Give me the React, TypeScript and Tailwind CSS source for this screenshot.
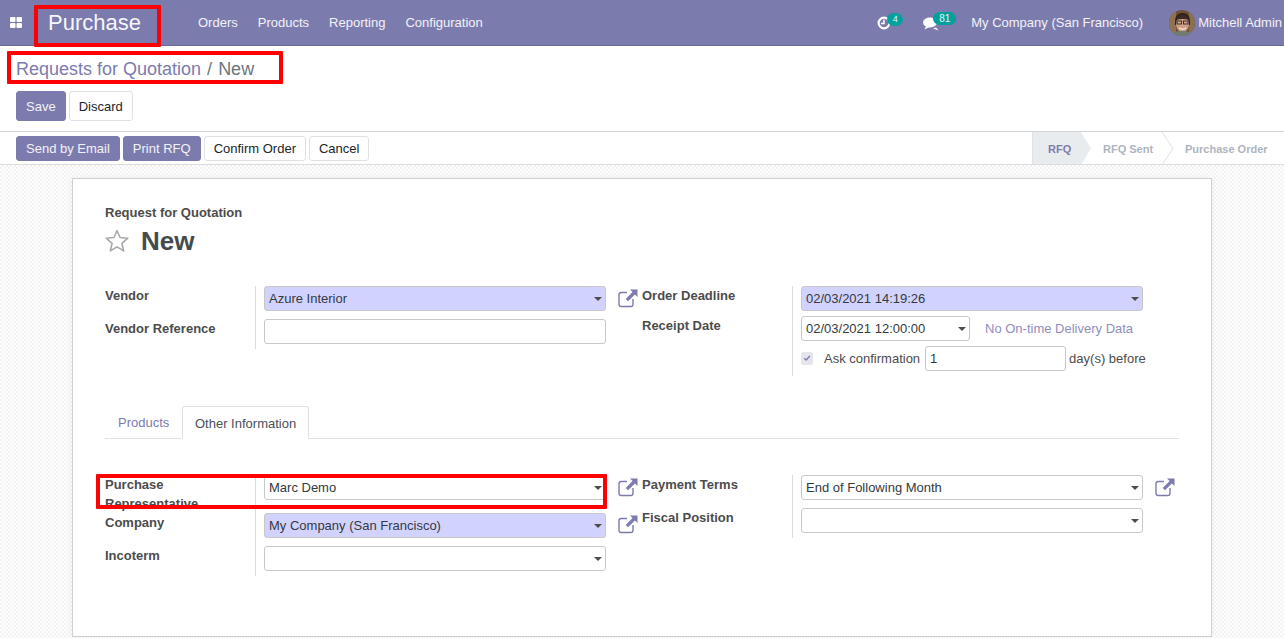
import React from "react";

const Ext = () => (
  <svg width="20" height="19" viewBox="0 0 20 19" fill="none" className="block">
    <path d="M9 3.500H3.200C2 3.500 1 4.500 1 5.700v9.600C1 16.500 2 17.500 3.200 17.500h9.600c1.200 0 2.200-1 2.200-2.200V10" stroke="#7c7bad" strokeWidth="1.400" />
    <path d="M12 0.500H19.500V8L16.900 5.400L10 12.300L7.700 10L14.600 3.100Z" fill="#7c7bad" />
  </svg>
);

const Caret = () => (
  <span className="absolute right-[3px] top-[10px] w-0 h-0 border-x-[4px] border-x-transparent border-t-[4px] border-t-[#4c4c4c]" />
);

const Field = ({ value = "", fill = false, caret = true, width = "w-[342px]" }: { value?: string; fill?: boolean; caret?: boolean; width?: string }) => (
  <div className={`relative ${width} h-[25px] border border-[#c8c8c8] rounded-[3px] pl-1 pr-4 leading-[23px] text-[#343a40] ${fill ? "bg-[#d2d2ff]" : "bg-white"}`}>
    {value}
    {caret && <Caret />}
  </div>
);

const Label = ({ children, h }: { children: React.ReactNode; h: string }) => (
  <div className={`${h} w-[151px] border-r border-[#dcdcdc] font-bold text-[#4c4c4c] leading-[19.500px] pr-[15px]`}>{children}</div>
);

const Row = ({ label, h, children, icon }: { label: React.ReactNode; h: string; children: React.ReactNode; icon?: React.ReactNode }) => (
  <div className="flex">
    <Label h={h}>{label}</Label>
    <div className="pl-2 w-[350px]">{children}</div>
    <div className="pl-3">{icon}</div>
  </div>
);

const Btn = ({ children, primary, h = "h-[30px]" }: { children: React.ReactNode; primary?: boolean; h?: string }) => (
  <div className={`${h} px-[9px] pt-[2px] rounded-[3px] flex items-center border ${primary ? "bg-[#7c7bad] border-[#7c7bad] text-white/90" : "bg-white border-[#dee2e6] text-[#212529]"}`}>{children}</div>
);

const Avatar = () => (
  <svg width="26" height="26" viewBox="0 0 26 26" className="block">
    <defs><clipPath id="av"><circle cx="13" cy="13" r="13" /></clipPath></defs>
    <g clipPath="url(#av)">
      <rect width="26" height="26" fill="#6f5238" />
      <rect x="0" y="0" width="7" height="26" fill="#8f7350" />
      <rect x="20" y="0" width="6" height="26" fill="#8a7050" />
      <path d="M6 12C6 5 9 3 13.500 3S21 5 21 12v3H6Z" fill="#33241b" />
      <ellipse cx="13.500" cy="14" rx="6.500" ry="8" fill="#cfa088" />
      <path d="M7 10c1-4 4-5 7-5s5 2 6 5c-4-1.500-9-1.500-13 0Z" fill="#3a2a20" />
      <rect x="8" y="11" width="4.500" height="3" fill="none" stroke="#2a2a2a" strokeWidth="0.900" />
      <rect x="14.500" y="11" width="4.500" height="3" fill="none" stroke="#2a2a2a" strokeWidth="0.900" />
      <path d="M10 18c2 1.500 5 1.500 7 0" stroke="#fff" strokeWidth="1" fill="none" />
      <path d="M2 26c1-4 6-5 11-5s10 1 11 5Z" fill="#6f7d74" />
    </g>
  </svg>
);

const NavBar = () => (
  <div className="h-[46px] bg-[#7c7bad] border-b border-[#6a699b] flex items-center text-white/90 shrink-0">
    <svg width="12" height="11" viewBox="0 0 12 11" className="ml-[10px] block">
      <rect x="0" y="0" width="5.500" height="5" rx="1" fill="#fff" />
      <rect x="6.500" y="0" width="5.500" height="5" rx="1" fill="#fff" />
      <rect x="0" y="6" width="5.500" height="5" rx="1" fill="#fff" />
      <rect x="6.500" y="6" width="5.500" height="5" rx="1" fill="#fff" />
    </svg>
    <div className="ml-[26px] text-[22px] leading-none w-[150px] text-white/95">Purchase</div>
    <div className="flex gap-5">
      <span>Orders</span>
      <span>Products</span>
      <span>Reporting</span>
      <span>Configuration</span>
    </div>
    <div className="ml-auto flex items-center">
      <div className="relative w-[26px] h-[20px] mr-[20px]">
        <svg width="14" height="14" viewBox="0 0 14 14" className="absolute left-0 top-[3px]">
          <circle cx="7" cy="7" r="5.400" stroke="#fff" strokeWidth="2.200" fill="none" />
          <path d="M7 3.500V7.500H4" stroke="#fff" strokeWidth="1.500" fill="none" />
        </svg>
        <span className="absolute left-[10px] top-0 w-[16px] h-[13px] rounded-full bg-[#00a09d] text-[9px] leading-[13px] text-center text-white/90">4</span>
      </div>
      <div className="relative w-[33px] h-[20px] mr-[15px]">
        <svg width="16" height="14" viewBox="0 0 16 14" className="absolute left-0 top-[4px]">
          <ellipse cx="7" cy="5.500" rx="7" ry="5" fill="#fff" />
          <path d="M3 9L1.500 12.500L6.500 10Z" fill="#fff" />
          <path d="M13 10.500L15.500 13.500L10 11.500Z" fill="#fff" />
        </svg>
        <span className="absolute left-[10px] top-[-1px] w-[23px] h-[13px] rounded-full bg-[#00a09d] text-[10px] leading-[13px] text-center text-white/90">81</span>
      </div>
      <span>My Company (San Francisco)</span>
      <div className="ml-[26px] mr-[3px]"><Avatar /></div>
      <span className="pr-[2px]">Mitchell Admin</span>
    </div>
  </div>
);

const Status = () => (
  <div className="flex self-stretch text-[11px] font-bold text-[#adb5bd]">
    <div className="relative w-[49px] bg-[#e9ecef] border-l border-[#dee2e6] flex items-center pl-[15px] pt-[3px] text-[#7c7bad]">
      RFQ
      <svg width="10" height="33" viewBox="0 0 10 33" className="absolute left-[48px] top-0">
        <path d="M0 0L10 16.500L0 33Z" fill="#e9ecef" />
      </svg>
    </div>
    <div className="relative w-[81px] flex items-center pl-[22px] pt-[3px]">
      RFQ Sent
      <svg width="12" height="33" viewBox="0 0 12 33" className="absolute left-[81px] top-0">
        <path d="M0 0L11 16.500L0 33" fill="none" stroke="#dee2e6" />
      </svg>
    </div>
    <div className="w-[122px] flex items-center pl-[23px] pt-[3px]">Purchase Order</div>
  </div>
);

const Control = () => (
  <div className="bg-white shrink-0">
    <div className="h-[45px] pl-4 pt-[10px] flex items-baseline text-[18px] leading-[26px]">
      <span className="text-[#7c7bad]">Requests for Quotation</span>
      <span className="text-[#6c757d] px-[6px]">/</span>
      <span className="text-[#6c757d]">New</span>
    </div>
    <div className="h-[40px] pl-4 flex gap-[3px] items-start">
      <Btn primary>Save</Btn>
      <Btn>Discard</Btn>
    </div>
    <div className="h-[34px] border-y border-y-[#ced4da] border-b-[#dcdcdc] pl-4 flex items-center justify-between">
      <div className="flex gap-[3px]">
        <Btn primary h="h-[25px]">Send by Email</Btn>
        <Btn primary h="h-[25px]">Print RFQ</Btn>
        <Btn h="h-[25px]">Confirm Order</Btn>
        <Btn h="h-[25px]">Cancel</Btn>
      </div>
      <Status />
    </div>
  </div>
);

const Star = () => (
  <svg width="26" height="25" viewBox="0 0 26 25" className="block -ml-px">
    <path d="M13 2.500L16 9.500L23.800 10.200L17.900 15.300L19.700 22.900L13 18.900L6.300 22.900L8.100 15.300L2.200 10.200L10 9.500Z" fill="none" stroke="#a9a9a9" strokeWidth="1.600" strokeLinejoin="round" />
  </svg>
);

const Card = () => (
  <div className="ml-[72px] w-[1140px] h-[459px] mt-[13px] bg-white border border-[#cfcfd6] pl-8 pr-8 pt-[24px] shadow-[0_0_6px_rgba(0,0,0,0.06)]">
    <div className="font-bold text-[#4c4c4c] leading-[19.500px]">Request for Quotation</div>
    <div className="flex items-center h-[38px] -mt-[1px]">
      <Star />
      <span className="ml-[11px] text-[26px] font-bold text-[#444b4f] leading-none">New</span>
    </div>

    <div className="flex mt-[26px]">
      <div className="w-[537px]">
        <Row label="Vendor" h="h-[33px]" icon={<div className="pt-[3px]"><Ext /></div>}>
          <Field value="Azure Interior" fill />
        </Row>
        <Row label="Vendor Reference" h="h-[30px]">
          <Field caret={false} />
        </Row>
      </div>
      <div className="flex">
        <div className="w-[151px] h-[90px] border-r border-[#dcdcdc] font-bold text-[#4c4c4c] leading-[19.500px]">
          <div className="h-[30px]">Order Deadline</div>
          <div>Receipt Date</div>
        </div>
        <div className="pl-2 flex flex-col gap-[5px]">
          <Field value="02/03/2021 14:19:26" fill />
          <div className="flex items-center">
            <Field value="02/03/2021 12:00:00" width="w-[169px]" />
            <span className="ml-[15px] pt-[2px] text-[#8f8ebd]">No On-time Delivery Data</span>
          </div>
          <div className="flex items-center text-[#4c4c4c]">
            <span className="w-[12px] h-[13px] rounded-[2px] bg-[#e4e6ec] flex items-center justify-center">
              <svg width="8" height="8" viewBox="0 0 8 8"><path d="M1.200 4.200L3.200 6L6.800 2" stroke="#7c7bad" strokeWidth="1.400" fill="none" /></svg>
            </span>
            <span className="ml-[11px] mr-[5px] pt-[2px]">Ask confirmation</span>
            <Field value="1" caret={false} width="w-[141px]" />
            <span className="ml-[3px] pt-[2px]">day(s) before</span>
          </div>
        </div>
      </div>
    </div>

    <div className="flex h-[33px] mt-[30px] border-b border-[#dee2e6]">
      <div className="w-[78px] pl-[13px] pt-[7px] text-[#7c7bad]">Products</div>
      <div className="w-[127px] h-[33px] pl-[12px] pt-[7px] -ml-px border border-b-white border-[#dee2e6] rounded-t-[3px] text-[#495057] bg-white">Other Information</div>
    </div>

    <div className="flex mt-[36px]">
      <div className="w-[537px]">
        <Row label={<div>Purchase<br />Representative</div>} h="h-[38px]" icon={<div className="pt-[3px]"><Ext /></div>}>
          <Field value="Marc Demo" />
        </Row>
        <Row label="Company" h="h-[33px]" icon={<div className="pt-[2px]"><Ext /></div>}>
          <Field value="My Company (San Francisco)" fill />
        </Row>
        <Row label="Incoterm" h="h-[30px]">
          <Field />
        </Row>
      </div>
      <div>
        <div className="flex">
          <Label h="h-[33px]">Payment Terms</Label>
          <div className="pl-2"><Field value="End of Following Month" /></div>
          <div className="pl-3 pt-[3px]"><Ext /></div>
        </div>
        <div className="flex">
          <Label h="h-[30px]">Fiscal Position</Label>
          <div className="pl-2"><Field /></div>
        </div>
      </div>
    </div>
  </div>
);

const Mark = ({ className }: { className: string }) => (
  <div className={`absolute border-[4px] border-[#ff0000] rounded-[1px] ${className}`} />
);

export default function App() {
  return (
    <div className="relative w-[1284px] h-[638px] overflow-hidden flex flex-col text-[13px] bg-white" style={{ fontFamily: '"Liberation Sans", Arial, sans-serif' }}>
      <NavBar />
      <Control />
      <div className="flex-1 bg-[repeating-conic-gradient(#f2f2f2_0_25%,#ffffff_0_50%)] bg-[length:4px_4px] overflow-hidden">
        <Card />
      </div>
      <Mark className="left-[34px] top-[5px] w-[127px] h-[42px]" />
      <Mark className="left-[7px] top-[51px] w-[276px] h-[33px]" />
      <Mark className="left-[96px] top-[474px] w-[511px] h-[35px]" />
    </div>
  );
}
